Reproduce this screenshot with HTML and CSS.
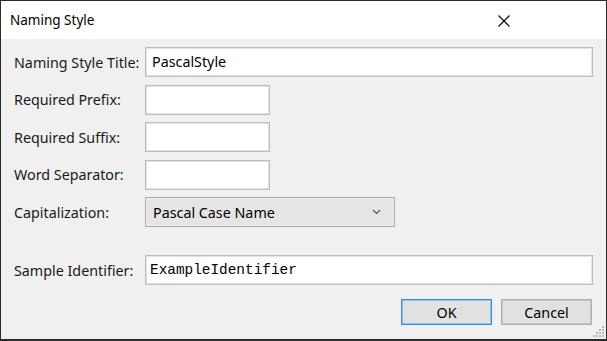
FILE: index.html
```html
<!DOCTYPE html>
<html lang="en">
<head>
  <meta charset="UTF-8" />
  <title>Naming Style</title>
  <link rel="stylesheet" href="styles.css">
</head>
<body>
  <div class="window">
    <div class="titlebar">
      <span class="title">Naming Style</span>
      <svg class="close" width="12" height="12" viewBox="0 0 12 12">
        <path d="M0.5 0.5 L11.5 11.5 M11.5 0.5 L0.5 11.5" stroke="#000" stroke-width="1.1" fill="none" />
      </svg>
    </div>

    <div class="content">
      <div class="form">
        <label>Naming Style Title:</label>
        <div class="textbox wide">PascalStyle</div>

        <label>Required Prefix:</label>
        <div class="textbox short"></div>

        <label>Required Suffix:</label>
        <div class="textbox short"></div>

        <label>Word Separator:</label>
        <div class="textbox short"></div>

        <label>Capitalization:</label>
        <div class="combo">
          <span>Pascal Case Name</span>
          <svg width="9" height="6" viewBox="0 0 9 6">
            <path d="M1 1 L4.5 4.5 L8 1" stroke="#555" stroke-width="1.2" fill="none" />
          </svg>
        </div>
      </div>

      <div class="form sample">
        <label>Sample Identifier:</label>
        <div class="textbox wide mono">ExampleIdentifier</div>
      </div>

      <div class="buttons">
        <button class="btn default">OK</button>
        <button class="btn">Cancel</button>
      </div>

      <svg class="grip" width="12" height="12" viewBox="0 0 12 12">
        <g fill="#b9b9b9">
          <rect x="9" y="1" width="2" height="2" />
          <rect x="6" y="4" width="2" height="2" />
          <rect x="9" y="4" width="2" height="2" />
          <rect x="3" y="7" width="2" height="2" />
          <rect x="6" y="7" width="2" height="2" />
          <rect x="9" y="7" width="2" height="2" />
          <rect x="0" y="10" width="2" height="2" />
          <rect x="3" y="10" width="2" height="2" />
          <rect x="6" y="10" width="2" height="2" />
          <rect x="9" y="10" width="2" height="2" />
        </g>
      </svg>
    </div>
  </div>
</body>
</html>
```

FILE: styles.css
```css
/* Base */
* {
  box-sizing: border-box;
  margin: 0;
  padding: 0;
}
html, body {
  width: 607px;
  height: 341px;
  overflow: hidden;
  font-family: 'Noto Sans', sans-serif;
  font-size: 14.3px;
  color: #1a1a1a;
  background: #f0f0f0;
}

/* Window frame */
.window {
  display: flex;
  flex-direction: column;
  width: 607px;
  height: 341px;
  border: 1px solid #2b2b2b;
  border-bottom-width: 2px;
}
.titlebar {
  display: flex;
  align-items: center;
  justify-content: space-between;
  height: 38px;
  padding: 0 96px 0 9px;
  background: #fff;
}
.title {
  font-size: 13.5px;
  color: #000;
}
.close {
  margin-top: 1px;
}

/* Content */
.content {
  position: relative;
  flex: 1;
  padding: 8px 12px 0 13px;
  background: #f0f0f0;
}
.form {
  display: grid;
  grid-template-columns: 131px 1fr;
  grid-auto-rows: 30px;
  row-gap: 7.5px;
  align-items: center;
}
.form label {
  white-space: nowrap;
}
.sample {
  margin-top: 28px;
}

.textbox {
  height: 30px;
  padding: 0 6px;
  line-height: 28px;
  background: #fff;
  border: 1px solid #bdbdbd;
  box-shadow: inset 0 0 0 1px #e4e4e4;
  color: #000;
}
.textbox.wide {
  width: 448px;
}
.textbox.short {
  width: 125px;
}
.mono {
  font-family: 'Liberation Mono', monospace;
  font-size: 14.4px;
  padding-left: 4px;
}

.combo {
  display: flex;
  align-items: center;
  justify-content: space-between;
  width: 250px;
  height: 30px;
  padding: 0 13px 0 7px;
  background: #e5e5e5;
  border: 1px solid #acacac;
  box-shadow: inset 0 0 0 1px #ececec;
  color: #000;
}

/* Buttons */
.buttons {
  display: flex;
  justify-content: flex-end;
  gap: 9px;
  margin-top: 14px;
  padding-right: 2px;
}
.btn {
  width: 91px;
  height: 26px;
  font-family: 'Noto Sans', sans-serif;
  font-size: 14.3px;
  color: #000;
  background: #e1e1e1;
  border: 1px solid #adadad;
  box-shadow: inset 0 0 0 1px #c9c9c9;
}
.btn.default {
  border-color: #2f8ee0;
  box-shadow: inset 0 0 0 1px #8cc1ee;
}

.grip {
  position: absolute;
  right: 1px;
  bottom: 2px;
}
```
